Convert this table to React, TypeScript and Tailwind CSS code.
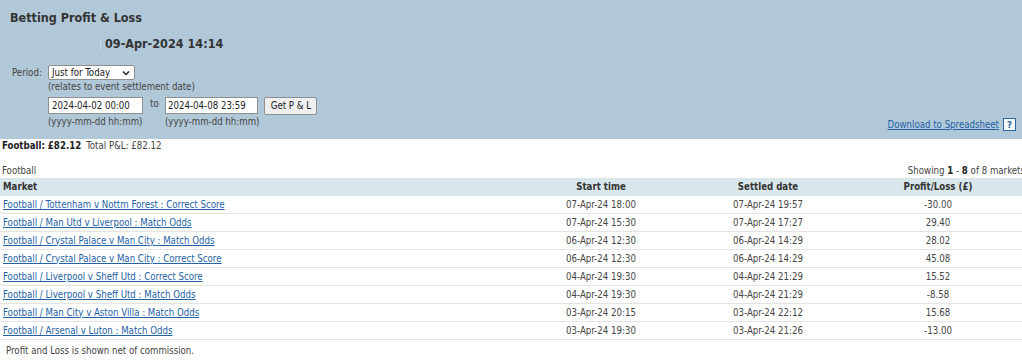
import React from "react";

const rows = [
  ["Football / Tottenham v Nottm Forest : Correct Score", "07-Apr-24 18:00", "07-Apr-24 19:57", "-30.00"],
  ["Football / Man Utd v Liverpool : Match Odds", "07-Apr-24 15:30", "07-Apr-24 17:27", "29.40"],
  ["Football / Crystal Palace v Man City : Match Odds", "06-Apr-24 12:30", "06-Apr-24 14:29", "28.02"],
  ["Football / Crystal Palace v Man City : Correct Score", "06-Apr-24 12:30", "06-Apr-24 14:29", "45.08"],
  ["Football / Liverpool v Sheff Utd : Correct Score", "04-Apr-24 19:30", "04-Apr-24 21:29", "15.52"],
  ["Football / Liverpool v Sheff Utd : Match Odds", "04-Apr-24 19:30", "04-Apr-24 21:29", "-8.58"],
  ["Football / Man City v Aston Villa : Match Odds", "03-Apr-24 20:15", "03-Apr-24 22:12", "15.68"],
  ["Football / Arsenal v Luton : Match Odds", "03-Apr-24 19:30", "03-Apr-24 21:26", "-13.00"],
];

export default function App() {
  return (
    <div className="w-[1022px] h-[360px] overflow-hidden bg-white text-[9.6px] leading-[12px] text-[#3a3a3a] font-['DejaVu_Sans_Condensed','DejaVu_Sans',sans-serif]">
      {/* Top panel */}
      <div className="h-[139px] bg-[#b1c8d8] pl-[10px] pr-[6px] pt-[10px] flex flex-col">
        <div className="text-[12.5px] leading-[16px] font-bold text-[#333]">Betting Profit &amp; Loss</div>
        <div className="mt-[10px] flex items-center h-[16px]">
          <span className="ml-[90px] w-[1px] h-[11px] bg-[#c9d8e3]" />
          <span className="ml-[4px] text-[12.5px] leading-[16px] font-bold text-[#333]">09-Apr-2024 14:14</span>
        </div>
        <div className="mt-[13px] flex items-center h-[15px]">
          <span className="ml-[2px] w-[36px] text-[#444]">Period:</span>
          <div className="w-[87px] h-[15px] bg-white border border-[#8f8f8f] rounded-[2px] flex items-center justify-between pl-[3px] pr-[4px] text-[#222]">
            <span>Just for Today</span>
            <svg width="8" height="6" viewBox="0 0 8 6" className="mt-[1px]">
              <path d="M1 1.5 L4 4.5 L7 1.5" fill="none" stroke="#222" strokeWidth="1.4" />
            </svg>
          </div>
        </div>
        <div className="flex flex-1">
          <div className="ml-[38px] flex flex-col">
            <div className="mt-[1px] h-[12px] text-[#444]">(relates to event settlement date)</div>
            <div className="mt-[4px] flex items-start">
              <div className="flex flex-col">
                <div className="w-[95px] h-[17px] bg-white border border-[#8f8f8f] flex items-center pl-[3px] text-[#222]">2024-04-02 00:00</div>
                <div className="mt-[2px] text-[#444]">(yyyy-mm-dd hh:mm)</div>
              </div>
              <span className="ml-[7px] mt-[1px] w-[15px] text-[#444]">to</span>
              <div className="flex flex-col">
                <div className="w-[93px] h-[17px] bg-white border border-[#8f8f8f] flex items-center pl-[2px] text-[#222]">2024-04-08 23:59</div>
                <div className="mt-[2px] text-[#444]">(yyyy-mm-dd hh:mm)</div>
              </div>
              <div className="ml-[5px] w-[53px] h-[18px] bg-[#efefef] border border-[#8f8f8f] rounded-[2px] flex items-center justify-center text-[#222]">Get P &amp; L</div>
            </div>
          </div>
          <div className="ml-auto self-end mb-[8px] flex items-center gap-[4px]">
            <span className="text-[#2462a6] underline">Download to Spreadsheet</span>
            <span className="w-[13px] h-[13px] border border-[#2b66a8] bg-[#f4f7fa] flex items-center justify-center text-[9.5px] font-bold text-[#2462a6]">?</span>
          </div>
        </div>
      </div>

      {/* Summary */}
      <div className="w-[1025px]">
        <div className="pl-[2px] mt-[1px] h-[12px] flex items-center">
          <span className="font-bold text-[#222]">Football: £82.12</span>
          <span className="ml-[5px] text-[#444]">Total P&amp;L: £82.12</span>
        </div>
        <div className="mt-[13px] flex items-center justify-between pl-[2px] h-[12px]">
          <span className="text-[#444]">Football</span>
          <span className="text-[#444]">
            Showing <b className="text-[#222]">1</b> - <b className="text-[#222]">8</b> of 8 markets
          </span>
        </div>
        <div className="mt-[1px] grid grid-cols-[517px_168px_166px_174px] h-[18px] bg-[#d9e6ec] items-center font-bold text-[#333]">
          <span className="pl-[3px]">Market</span>
          <span className="text-center">Start time</span>
          <span className="text-center">Settled date</span>
          <span className="text-center">Profit/Loss (£)</span>
        </div>
        {rows.map((r) => (
          <div key={r[0]} className="grid grid-cols-[517px_168px_166px_174px] h-[18px] border-b border-[#e3e3e3] items-center text-[#444]">
            <span className="pl-[3px] text-[#2462a6] underline">{r[0]}</span>
            <span className="text-center">{r[1]}</span>
            <span className="text-center">{r[2]}</span>
            <span className="text-center">{r[3]}</span>
          </div>
        ))}
        <div className="mt-[5px] pl-[6px] text-[#444]">Profit and Loss is shown net of commission.</div>
      </div>
    </div>
  );
}
